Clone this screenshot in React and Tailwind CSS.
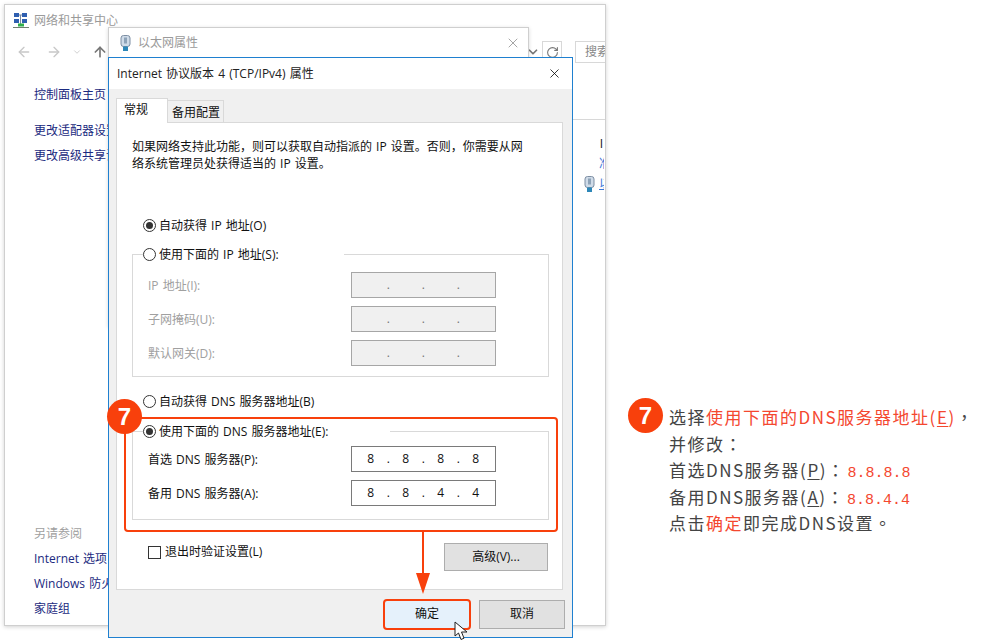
// App.jsx
import { ArrowLeft, ArrowRight, ArrowUp, ChevronDown, RotateCw, X } from "lucide-react";

const UI_FONT = "font-['Open_Sans','Noto_Sans_CJK_SC',sans-serif] [word-spacing:1px]";
const LINK = "text-[#1b2a80]";

function NetworkIcon() {
  return (
    <svg width="16" height="17" viewBox="0 0 16 17" className="shrink-0">
      <rect x="1" y="1" width="5" height="4" fill="#2f5fb0" />
      <rect x="9" y="1" width="5" height="4" fill="#2f5fb0" />
      <rect x="1" y="7" width="5" height="4" fill="#2f5fb0" />
      <rect x="9" y="7" width="5" height="4" fill="#2f5fb0" />
      <path d="M6 3H9M7.5 3V12" stroke="#7a8aa0" strokeWidth="1" />
      <rect x="5" y="11.5" width="6" height="3" fill="#2fae4a" />
      <rect x="0" y="15" width="16" height="1" fill="#6f7f70" />
    </svg>
  );
}

function EthernetIcon() {
  return (
    <svg width="11" height="16" viewBox="0 0 11 16" className="shrink-0">
      <rect x="1" y="0.5" width="9" height="11" rx="2.5" fill="#cfdbe8" stroke="#7d8ea3" />
      <rect x="4" y="2.5" width="3" height="6" fill="#8ea3b8" />
      <rect x="3" y="11.5" width="5" height="4.5" fill="#2d87b8" />
    </svg>
  );
}

function Radio({ checked }) {
  return (
    <span className="flex h-[13px] w-[13px] shrink-0 items-center justify-center rounded-full border border-[#333] bg-white">
      {checked && <span className="h-[7px] w-[7px] rounded-full bg-[#333]" />}
    </span>
  );
}

function RadioLabel({ checked, children, className = "" }) {
  return (
    <div className={`flex items-center gap-[3px] text-[12px] leading-[17px] text-[#111] ${className}`}>
      <Radio checked={checked} />
      <span>{children}</span>
    </div>
  );
}

function IpRow({ label, value, disabled }) {
  return (
    <div className="flex h-[26px] items-center justify-between">
      <span className={`pt-[2px] text-[12px] ${disabled ? "text-[#a0a0a0]" : "text-[#111]"}`}>{label}</span>
      <div
        className={`flex h-[26px] w-[145px] items-center border pl-[10px] text-[12px] ${
          disabled ? "border-[#a6a6a6] bg-[#f0f0f0] text-[#777]" : "border-[#7a7a7a] bg-white text-[#111]"
        }`}
      >
        <div className="grid grid-cols-[repeat(7,17.5px)] items-center text-center">
          {value.map((v, i) => (
            <span key={i}>{v}</span>
          ))}
        </div>
      </div>
    </div>
  );
}

function BackWindow() {
  return (
    <div className={`absolute left-[4px] top-[4px] flex h-[622px] w-[602px] flex-col overflow-hidden border border-[#cfcfcf] bg-white shadow-[0_1px_4px_rgba(0,0,0,0.18)] ${UI_FONT}`}>
      <div className="flex h-[30px] items-center gap-[5px] pl-[8px] text-[12px] text-[#9a9a9a]">
        <NetworkIcon />
        <span className="pt-[1px]">网络和共享中心</span>
      </div>
      <div className="flex h-[34px] items-center pl-[11px] text-[#c8c8c8]">
        <ArrowLeft size={16} strokeWidth={2} className="mr-[14px]" />
        <ArrowRight size={16} strokeWidth={2} className="mr-[10px]" />
        <ChevronDown size={10} strokeWidth={2} className="mr-[10px]" />
        <ArrowUp size={16} strokeWidth={2.5} className="text-[#777]" />
        <div className="ml-auto flex items-center">
          <ChevronDown size={14} strokeWidth={3} className="mr-[2px] text-[#777]" />
          <div className="mr-[13px] flex h-[22px] w-[20px] items-center justify-center border border-[#d8d8d8] text-[#777]">
            <RotateCw size={13} strokeWidth={2} />
          </div>
          <div className="flex h-[22px] w-[30px] items-center overflow-hidden whitespace-nowrap border border-r-0 border-[#d8d8d8] pl-[9px] text-[12px] text-[#888]">
            搜索
          </div>
        </div>
      </div>
      <div className="flex flex-1">
        <div className={`flex w-[110px] flex-col whitespace-nowrap pb-[4px] pl-[29px] pt-[13px] text-[12px] ${LINK}`}>
          <div className="leading-[25px]">控制面板主页</div>
          <div className="mt-[11px] leading-[25px]">更改适配器设置</div>
          <div className="leading-[25px]">更改高级共享设置</div>
          <div className="mt-auto leading-[25px] text-[#a0a0a0]">另请参阅</div>
          <div className="leading-[25px]">Internet 选项</div>
          <div className="leading-[25px]">Windows 防火墙</div>
          <div className="leading-[25px]">家庭组</div>
        </div>
        <div className="ml-auto mt-[50px] h-[100px] w-[32px] border-t border-[#d8d8d8] pl-[11px] pt-[15px] text-[12px]">
          <div className="flex h-[17px] w-[20px] items-center justify-end overflow-hidden pr-[1px] leading-[17px] text-[#111]">I</div>
          <div className="mt-[3px] flex h-[17px] w-[20px] justify-end overflow-hidden leading-[17px] text-[#3b78d8]">
            <span className="w-[5px] overflow-hidden">准</span>
          </div>
          <div className="mt-[3px] flex h-[17px] w-[20px] items-center justify-between text-[#3b78d8]">
            <EthernetIcon />
            <span className="ml-[4px] w-[5px] overflow-hidden underline">以</span>
          </div>
        </div>
      </div>
    </div>
  );
}

function MiddleWindow() {
  return (
    <div className={`absolute left-[108px] top-[27px] h-[300px] w-[421px] border border-[#cfcfcf] bg-white shadow-[0_1px_4px_rgba(0,0,0,0.15)] ${UI_FONT}`}>
      <div className="flex h-[30px] items-center pl-[11px] pr-[7px] text-[12px] text-[#9a9a9a]">
        <EthernetIcon />
        <span className="ml-[7px]">以太网属性</span>
        <X size={16} strokeWidth={1} className="ml-auto text-[#777]" />
      </div>
    </div>
  );
}

function Dialog() {
  return (
    <div className={`absolute left-[108px] top-[57px] flex h-[581px] w-[465px] flex-col border border-[#1f80d0] bg-[#f0f0f0] ${UI_FONT}`}>
      <div className="flex h-[31px] shrink-0 items-center bg-white pl-[8px] pr-[10px] text-[12px] text-[#222]">
        <span>Internet 协议版本 4 (TCP/IPv4) 属性</span>
        <X size={15} strokeWidth={1.25} className="ml-auto text-black" />
      </div>

      <div className="flex flex-1 flex-col px-[7px] pt-[9px]">
        <div className="flex h-[24px] items-end text-[12px] text-[#111]">
          <div className="z-10 -mb-px h-[25px] w-[52px] border border-b-0 border-[#d9d9d9] bg-white pl-[7px] leading-[21px]">常规</div>
          <div className="h-[22px] w-[56px] border border-b-0 border-l-0 border-[#d9d9d9] bg-[#f0f0f0] pl-[4px] leading-[23px]">备用配置</div>
        </div>

        <div className="flex h-[468px] w-[447px] flex-col border border-[#d9d9d9] bg-white pl-[15px] pr-[13px] pt-[15px]">
          <p className="w-[400px] text-[12px] leading-[17px] text-[#111]">
            如果网络支持此功能，则可以获取自动指派的 IP 设置。否则，你需要从网络系统管理员处获得适当的 IP 设置。
          </p>

          <RadioLabel checked className="ml-[11px] mt-[45px]">自动获得 IP 地址(O)</RadioLabel>

          <fieldset className="mt-[12px] h-[131px] w-[417px] border border-[#d9d9d9]">
            <legend className="ml-[10px] h-[17px] w-[201px] bg-white">
              <RadioLabel>使用下面的 IP 地址(S):</RadioLabel>
            </legend>
            <div className="mt-[9px] flex flex-col gap-[8px] pl-[15px] pr-[52px]">
              <IpRow disabled label="IP 地址(I):" value={[" ", ".", " ", ".", " ", ".", " "]} />
              <IpRow disabled label="子网掩码(U):" value={[" ", ".", " ", ".", " ", ".", " "]} />
              <IpRow disabled label="默认网关(D):" value={[" ", ".", " ", ".", " ", ".", " "]} />
            </div>
          </fieldset>

          <RadioLabel className="ml-[11px] mt-[16px]">自动获得 DNS 服务器地址(B)</RadioLabel>

          <fieldset className="mt-[13px] h-[97px] w-[417px] border border-[#d9d9d9]">
            <legend className="ml-[10px] h-[17px] w-[247px] bg-white">
              <RadioLabel checked>使用下面的 DNS 服务器地址(E):</RadioLabel>
            </legend>
            <div className="mt-[6px] flex flex-col gap-[8px] pl-[15px] pr-[52px]">
              <IpRow label="首选 DNS 服务器(P):" value={["8", ".", "8", ".", "8", ".", "8"]} />
              <IpRow label="备用 DNS 服务器(A):" value={["8", ".", "8", ".", "4", ".", "4"]} />
            </div>
          </fieldset>

          <div className="mt-[23px] flex items-start justify-between pl-[16px] pr-[1px]">
            <div className="flex items-center gap-[4px] text-[12px] text-[#111]">
              <span className="h-[13px] w-[13px] border border-[#333] bg-white" />
              <span>退出时验证设置(L)</span>
            </div>
            <button className="h-[28px] w-[104px] border border-[#adadad] bg-[#e1e1e1] text-[12px] text-[#111]">高级(V)...</button>
          </div>
        </div>

        <div className="flex flex-1 items-center justify-end gap-[8px] pt-[1px]">
          <button className="h-[31px] w-[88px] rounded-[4px] border-2 border-[#f8400c] bg-[#e5f1fb] text-[12px] text-[#111]">确定</button>
          <button className="h-[29px] w-[86px] border border-[#adadad] bg-[#e1e1e1] text-[12px] text-[#111]">取消</button>
        </div>
      </div>
    </div>
  );
}

function Badge() {
  return (
    <span className="flex h-[35px] w-[35px] shrink-0 items-center justify-center rounded-full bg-[#f8400c] font-['Liberation_Sans',sans-serif] text-[24px] font-bold leading-none text-white">
      7
    </span>
  );
}

function Highlights() {
  return (
    <>
      <div className="absolute left-[124px] top-[417px] h-[115px] w-[434px] rounded-[4px] border-2 border-[#f8400c]" />
      <div className="absolute left-[107px] top-[399px]">
        <Badge />
      </div>
      {/* arrow down to the OK button */}
      <svg className="absolute left-[415px] top-[531px]" width="16" height="63" viewBox="0 0 16 63">
        <rect x="7" y="0" width="2" height="44" fill="#f8400c" />
        <path d="M1 42H15L8 63Z" fill="#f8400c" />
      </svg>
      {/* mouse pointer */}
      <svg className="absolute left-[454px] top-[621px]" width="15" height="20" viewBox="0 0 15 20">
        <path d="M1 1L1 15L4.5 12L7 18.5L10 17.2L7.5 11H13Z" fill="#fff" stroke="#222" strokeWidth="1" strokeLinejoin="round" />
      </svg>
    </>
  );
}

function Note() {
  const red = "text-[#f4472f]";
  const num = `ml-[2px] font-['Liberation_Mono',monospace] text-[15px] tracking-[0px] ${red}`;
  const line = "h-[26.5px]";
  const u = "underline underline-offset-2";
  return (
    <div className="flex items-start gap-[6px] pt-[398px]">
      <Badge />
      <div className="mt-[6px] whitespace-nowrap font-['Noto_Sans_CJK_TC',sans-serif] text-[17px] leading-[26.5px] tracking-[1.5px] text-[#444]">
        <div className={line}>
          选择<span className={red}>使用下面的DNS服务器地址(<span className={u}>E</span>)</span>，
        </div>
        <div className={line}>并修改：</div>
        <div className={line}>
          首选DNS服务器(<span className={u}>P</span>)：<span className={num}>8.8.8.8</span>
        </div>
        <div className={line}>
          备用DNS服务器(<span className={u}>A</span>)：<span className={num}>8.8.4.4</span>
        </div>
        <div className={line}>
          点击<span className={red}>确定</span>即完成DNS设置。
        </div>
      </div>
    </div>
  );
}

export default function App() {
  return (
    <div className="flex h-[643px] w-[984px] overflow-hidden bg-white">
      <div className="relative h-full w-[628px] shrink-0">
        <BackWindow />
        <MiddleWindow />
        <Dialog />
        <Highlights />
      </div>
      <Note />
    </div>
  );
}
